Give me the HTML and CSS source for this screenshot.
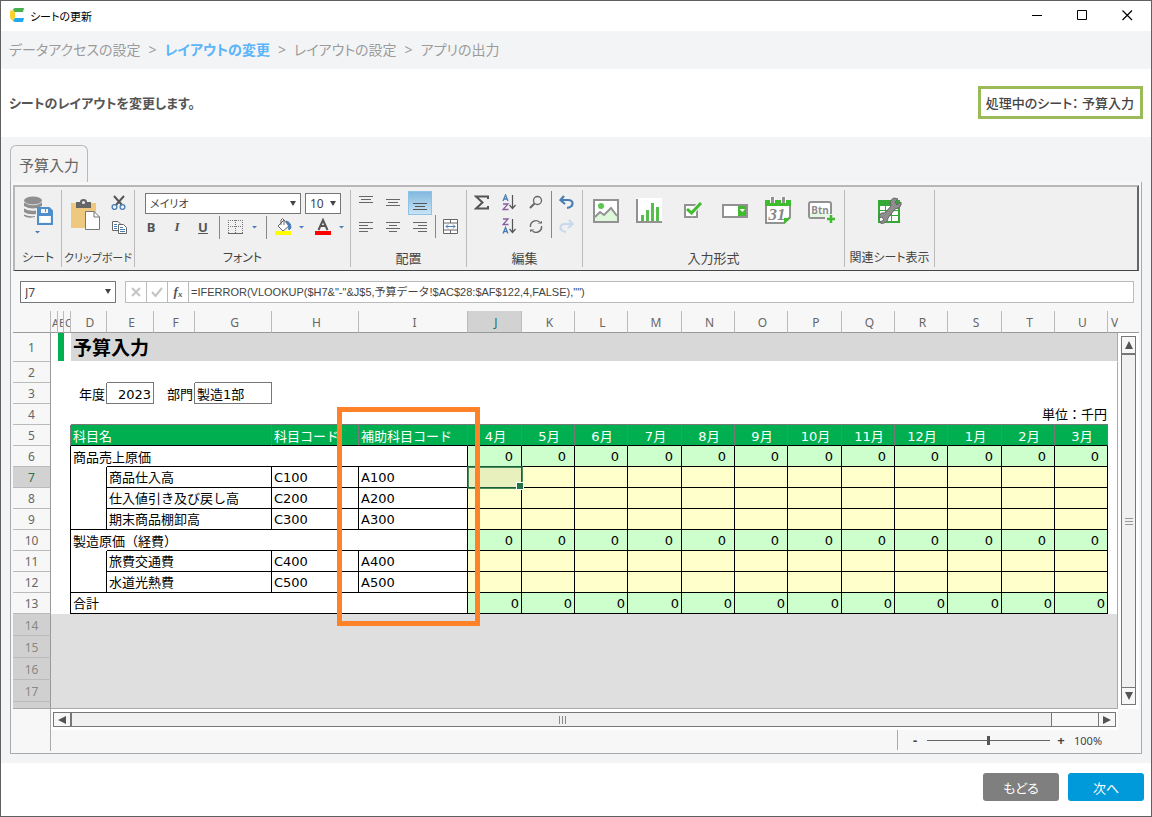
FILE: index.html
```html
<!DOCTYPE html>
<html lang="ja">
<head>
<meta charset="utf-8">
<title>シートの更新</title>
<link rel="stylesheet" href="styles.css">
</head>
<body>
<div class="window">
  <header class="titlebar">
    <svg class="logo" width="15" height="15" viewBox="0 0 15 15"><path d="M3 1Q4 0 6 0H14L13 4H4Z" fill="#48b050"/><path d="M0 4Q0 2 2 2L5 4V10L3 13Q0 11 0 9Z" fill="#fbd12c"/><path d="M5 10H14L13 14H6Q4 14 3 13Z" fill="#1fa9ec"/></svg>
    <span class="title">シートの更新</span>
    <button class="winbtn" aria-label="最小化"><svg width="11" height="11"><path d="M0 5.500H10" stroke="#000"/></svg></button>
    <button class="winbtn" aria-label="最大化"><svg width="11" height="11"><path d="M.5 .5H9.500V9.500H.5Z" fill="none" stroke="#000"/></svg></button>
    <button class="winbtn" aria-label="閉じる"><svg width="11" height="11"><path d="M.5 .5L10 10M10 .5L.5 10" stroke="#000" stroke-width="1.200"/></svg></button>
  </header>
  <nav class="crumbs">
    <span>データアクセスの設定</span><span>&gt;</span><b>レイアウトの変更</b><span>&gt;</span><span>レイアウトの設定</span><span>&gt;</span><span>アプリの出力</span>
  </nav>
  <section class="intro">
    <h1>シートのレイアウトを変更します。</h1>
    <div class="current">処理中のシート： 予算入力</div>
  </section>
  <main class="work">
    <button class="tab">予算入力</button>
    <div class="panel">
      <div class="ribbon">
        <section class="group g-sheet">
          <div class="tools">
            <button class="ic" aria-label="保存"><svg width="30" height="38"><g fill="#8f8f8f"><ellipse cx="10" cy="4.500" rx="9" ry="4"/><path d="M1 6.500Q10 12 19 6.500V10Q10 15 1 10Z"/><path d="M1 12.500Q6 15.500 13 14.500V18Q5 19 1 16Z"/><path d="M1 18.500Q6 21 12 20V21Q5 23 1 20Z"/></g><path d="M15 12H26L29 15V28H15Z" fill="#f0f0f0" stroke="#4d8ecb" stroke-width="2"/><path d="M15 12H26L29 15V20H15Z" fill="#4d8ecb"/><path d="M18 13H25V17H18Z" fill="#f5f5f5"/><path d="M22 13H23V16H22Z" fill="#4d8ecb"/><path d="M17.500 20H26.500V26H17.500Z" fill="#fff"/><path d="M12 35H17L14.500 37.500Z" fill="#4a7ab8"/></svg></button>
          </div>
          <div class="label">シート</div>
        </section>
        <section class="group g-clip">
          <div class="tools">
            <button class="ic" aria-label="貼り付け"><svg width="30" height="32"><path d="M0 4H25V29H0Z" fill="#edc87e"/><path d="M5 3H9Q9 0 12.500 0T16 3H20V9H5Z" fill="#666"/><circle cx="12.500" cy="3.500" r="1.500" fill="#f0f0f0"/><path d="M14.500 12.500H23L28.500 18V30.500H14.500Z" fill="#fff" stroke="#777"/><path d="M23 12.500V18H28.500" fill="none" stroke="#777"/></svg></button>
            <div class="stack">
              <button class="ic" aria-label="切り取り"><svg width="16" height="16"><path d="M3 1L11 10M13 1L5 10" stroke="#555" stroke-width="2"/><circle cx="3.500" cy="12" r="2.400" fill="none" stroke="#4a7fb5" stroke-width="1.300"/><circle cx="11.500" cy="12" r="2.400" fill="none" stroke="#4a7fb5" stroke-width="1.300"/></svg></button>
              <button class="ic" aria-label="コピー"><svg width="16" height="16"><path d="M1.500 2.500H7L9 4.500V11.500H1.500Z" fill="#fff" stroke="#666"/><path d="M7.500 5.500H12.500L15.500 8.500V14.500H7.500Z" fill="#fff" stroke="#666"/><path d="M3 5.500H6M3 7.500H6M3 9.500H6M9 8.500H12M9 10.500H14M9 12.500H14" stroke="#4a7fb5"/></svg></button>
            </div>
          </div>
          <div class="label">クリップボード</div>
        </section>
        <section class="group g-font">
          <div class="tools">
            <div class="row">
              <span class="pick family"><select aria-label="フォント名"><option>メイリオ</option></select></span>
              <span class="pick size"><select aria-label="サイズ"><option>10</option></select></span>
            </div>
            <div class="row marks">
              <button class="ch">B</button><button class="ch it">I</button><button class="ch un">U</button>
              <i class="bar"></i>
              <button class="ic" aria-label="罫線"><svg width="30" height="16"><path d="M.5 1V14M7.500 1V14M14.500 1V14M0 1.500H15M0 7.500H15" stroke="#777" stroke-dasharray="1 1"/><path d="M0 14.500H15" stroke="#666"/><path d="M24 7H29L26.500 9.500Z" fill="#4a7ab8"/></svg></button>
              <i class="bar"></i>
              <button class="ic" aria-label="塗りつぶし"><svg width="31" height="18"><path d="M3 8L9 2L14 8L8 13Z" fill="#fff" stroke="#666"/><path d="M6 7V2Q7.500-1 9 2V7" fill="none" stroke="#666"/><path d="M11 3Q16 4 16 10L14 12Q14 7 11 3Z" fill="#4a7fb5" stroke="#4a7fb5"/><path d="M0 13H16V17H0Z" fill="#ff0"/><path d="M24 8H29L26.500 10.500Z" fill="#4a7ab8"/></svg></button>
              <button class="ic" aria-label="文字色"><svg width="31" height="18"><path d="M3.500 12L8 2L12.500 12M5.500 8H10.500" fill="none" stroke="#555" stroke-width="2"/><path d="M0 13H16V17H0Z" fill="#f00"/><path d="M24 8H29L26.500 10.500Z" fill="#4a7ab8"/></svg></button>
            </div>
          </div>
          <div class="label">フォント</div>
        </section>
        <section class="group g-align">
          <div class="tools">
            <div class="aligns">
              <button class="al" aria-label="上揃え"><svg width="14" height="16"><path d="M0 1.500H14M2 4.500H12M0 7.500H14" stroke="#666"/></svg></button>
              <button class="al" aria-label="中央揃え(縦)"><svg width="14" height="16"><path d="M0 4.500H14M2 7.500H12M0 10.500H14" stroke="#666"/></svg></button>
              <button class="al on" aria-label="下揃え"><svg width="14" height="16"><path d="M0 8.500H14M2 11.500H12M0 14.500H14" stroke="#555"/></svg></button>
              <button class="al" aria-label="左揃え"><svg width="14" height="12"><path d="M0 1.500H14M0 4.500H9M0 7.500H14M0 10.500H9" stroke="#666"/></svg></button>
              <button class="al" aria-label="中央揃え"><svg width="14" height="12"><path d="M0 1.500H14M3 4.500H11M0 7.500H14M3 10.500H11" stroke="#666"/></svg></button>
              <button class="al" aria-label="右揃え"><svg width="14" height="12"><path d="M0 1.500H14M5 4.500H14M0 7.500H14M5 10.500H14" stroke="#666"/></svg></button>
            </div>
            <i class="bar low"></i>
            <button class="ic low" aria-label="結合"><svg width="16" height="16"><path d="M.5 .5H14.500V14.500H.5ZM.5 4H14.500M.5 11H14.500M7.500 .5V4M7.500 11V14.500" fill="#fff" stroke="#666"/><path d="M3 7.500H12M5 5.500L3 7.500L5 9.500M10 5.500L12 7.500L10 9.500" fill="none" stroke="#4a7fb5"/></svg></button>
          </div>
          <div class="label">配置</div>
        </section>
        <section class="group g-edit">
          <div class="tools">
            <button class="ic" aria-label="合計"><svg width="16" height="16"><path d="M14 5V2.500H2L8.500 8.500L2 14.500H14V12" fill="none" stroke="#555" stroke-width="2"/></svg></button>
            <div class="stack">
              <button class="ic" aria-label="昇順"><svg width="15" height="17"><path d="M1 7L3.500 1L6 7M2 5H5" fill="none" stroke="#4a7fb5" stroke-width="1.300"/><path d="M1 10H6L1 15.500H6.500" fill="none" stroke="#8860a0" stroke-width="1.300"/><path d="M10.500 1V14M7.500 11L10.500 14.500L13.500 11" fill="none" stroke="#555" stroke-width="1.200"/></svg></button>
              <button class="ic" aria-label="降順"><svg width="15" height="17"><path d="M1 1H6L1 6.500H6.500" fill="none" stroke="#8860a0" stroke-width="1.300"/><path d="M1 15.500L3.500 9.500L6 15.500M2 13.500H5" fill="none" stroke="#4a7fb5" stroke-width="1.300"/><path d="M10.500 1V14M7.500 11L10.500 14.500L13.500 11" fill="none" stroke="#555" stroke-width="1.200"/></svg></button>
            </div>
            <div class="stack">
              <button class="ic" aria-label="検索"><svg width="15" height="17"><circle cx="8.500" cy="6.500" r="4" fill="none" stroke="#666" stroke-width="1.300"/><path d="M5.500 9.500L1 14" stroke="#666" stroke-width="2"/></svg></button>
              <button class="ic" aria-label="再計算"><svg width="15" height="17"><path d="M1.500 9A5.500 5.500 0 0 1 10.500 4M12.500 8A5.500 5.500 0 0 1 3.500 13" fill="none" stroke="#666" stroke-width="1.400"/><path d="M8.500 5.500H13V3ZM5.500 11.500H1V14Z" fill="#666"/></svg></button>
            </div>
            <i class="bar tall"></i>
            <div class="stack">
              <button class="ic" aria-label="元に戻す"><svg width="15" height="17"><path d="M5 2L1.500 6L6 10M2 6H9Q13.500 6 13.500 9.500T8 14" fill="none" stroke="#4a7fb5" stroke-width="2.200"/></svg></button>
              <button class="ic" aria-label="やり直す"><svg width="15" height="17"><path d="M10 2L13.500 6L9 10M13 6H6Q1.500 6 1.500 9.500T7 14" fill="none" stroke="#c9d9eb" stroke-width="2.200"/></svg></button>
            </div>
          </div>
          <div class="label">編集</div>
        </section>
        <section class="group g-input">
          <div class="tools">
            <button class="ic" aria-label="画像"><svg width="26" height="28"><path d="M1 4H25V26H1Z" fill="#fff" stroke="#929292" stroke-width="2"/><path d="M2 20L7 15L11 19L18 11L24 19V25H2Z" fill="#dff8dc"/><path d="M2 21L7 16L11 19L18 12L24 20" fill="none" stroke="#929292" stroke-width="2"/><circle cx="8" cy="10" r="3" fill="#5cc653"/></svg></button>
            <button class="ic" aria-label="グラフ"><svg width="26" height="28"><path d="M0 2H26V27H0Z" fill="#fff"/><path d="M1 3V26H26" fill="none" stroke="#929292" stroke-width="2"/><path d="M5 19H8V25H5ZM10 14H13V25H10ZM15 7H18V25H15ZM20 11H23V25H20Z" fill="#56be4d"/></svg></button>
            <button class="ic" aria-label="チェックボックス"><svg width="26" height="28"><path d="M6 9H18V21H6Z" fill="#fff" stroke="#929292" stroke-width="2"/><path d="M9 13L13 17L22 6" fill="none" stroke="#f0f0f0" stroke-width="5"/><path d="M8 13L12.500 17L22 7" fill="none" stroke="#3fbc2e" stroke-width="3"/></svg></button>
            <button class="ic" aria-label="ドロップダウン"><svg width="26" height="28"><path d="M1 9H25V21H1Z" fill="#fff" stroke="#929292" stroke-width="2"/><path d="M16 10H24V20H16Z" fill="#3fbc2e"/><path d="M17.500 13H23L20.500 16Z" fill="#fff"/></svg></button>
            <button class="ic" aria-label="日付"><svg width="26" height="28"><path d="M1 8H25V21L19 27H1Z" fill="#fff" stroke="#929292" stroke-width="2"/><path d="M0 4H26V10H0Z" fill="#3fbc2e"/><path d="M19 28V22H26Z" fill="#3fbc2e"/><path d="M7.500 1V7M18.500 1V7" stroke="#fff" stroke-width="5"/><path d="M7.500 1V7M18.500 1V7" stroke="#929292" stroke-width="3"/><text x="12" y="24" class="t31">31</text></svg></button>
            <button class="ic" aria-label="ボタン"><svg width="28" height="28"><path d="M3 6H21Q23 6 23 8V20Q23 22 21 22H3Q1 22 1 20V8Q1 6 3 6Z" fill="#fff" stroke="#929292" stroke-width="2"/><path d="M2 17H22V21H2Z" fill="#e3f8e0"/><text x="12" y="18" class="tbtn">Btn</text><path d="M17 18H28V28H17Z" fill="#f0f0f0"/><path d="M23 19V27M19 23H27" stroke="#3fbc2e" stroke-width="2.500"/></svg></button>
          </div>
          <div class="label">入力形式</div>
        </section>
        <section class="group g-rel">
          <div class="tools">
            <button class="ic" aria-label="関連シート表示"><svg width="26" height="28"><path d="M1 4H23V27H1Z" fill="#35a936"/><path d="M3 10H8V14H3ZM9 10H14V14H9ZM15 10H21V14H15ZM3 15H8V19H3ZM9 15H14V19H9ZM15 15H21V19H15ZM3 20H8V25H3ZM9 20H14V25H9ZM15 20H21V25H15Z" fill="#fff"/><path d="M17 2L21 3L18 6L20 9L24 6Q25 12 18 13L11 22Q11 27 4 27.500L3 26L7 24L5 21L2 22Q2 16 8 17L14 10Q12 4 17 2Z" fill="#8e8e8e" stroke="#666"/></svg></button>
          </div>
          <div class="label">関連シート表示</div>
        </section>
      </div>

      <div class="formula">
        <span class="pick cellref"><select aria-label="セル"><option>J7</option></select></span>
        <div class="fx">
          <button aria-label="キャンセル"><svg width="12" height="12"><path d="M2 2L10 10M10 2L2 10" stroke="#c4c4c4" stroke-width="2"/></svg></button>
          <button aria-label="確定"><svg width="12" height="12"><path d="M1 6L4.500 10L11 2" fill="none" stroke="#c4c4c4" stroke-width="2"/></svg></button>
          <button class="fn"><i>f</i><small>x</small></button>
          <input aria-label="数式" value='=IFERROR(VLOOKUP($H7&amp;"-"&amp;J$5,予算データ!$AC$28:$AF$122,4,FALSE),"")'>
        </div>
      </div>

      <div class="sheetarea">
        <div class="sheet">
          <table class="grid">
            <colgroup><col class="w38"><col class="w7"><col class="w6"><col class="w7"><col class="w36"><col class="w47"><col class="w41"><col class="w77"><col class="w87"><col class="w109"><col class="w54"><col class="w53"><col class="w53"><col class="w54"><col class="w53"><col class="w53"><col class="w54"><col class="w53"><col class="w53"><col class="w54"><col class="w53"><col class="w53"><col></colgroup>
            <thead><tr><th></th><th class="slim">A</th><th class="slim">B</th><th class="slim">C</th><th>D</th><th>E</th><th>F</th><th>G</th><th>H</th><th>I</th><th class="sel">J</th><th>K</th><th>L</th><th>M</th><th>N</th><th>O</th><th>P</th><th>Q</th><th>R</th><th>S</th><th>T</th><th>U</th><th>V</th></tr></thead>
            <tbody>
              <tr class="r1"><th>1</th><td></td><td class="mark"></td><td></td><td class="name" colspan="19">予算入力</td></tr>
              <tr><th>2</th><td colspan="4"></td><td class="gb"></td><td></td><td class="gb"></td><td colspan="15"></td></tr>
              <tr><th>3</th><td colspan="3"></td><td class="gr ar">年度</td><td class="gr gb ar lowtext">2023</td><td class="gr ar">部門</td><td class="gr gb lowtext">製造1部</td><td colspan="15"></td></tr>
              <tr><th>4</th><td colspan="3"></td><td class="gb ar" colspan="18">単位：千円</td><td></td></tr>
              <tr class="head"><th>5</th><td colspan="2"></td><td class="gr"></td><td class="hd" colspan="4">科目名</td><td class="hd">科目コード</td><td class="hd">補助科目コード</td><td class="hd m">4月</td><td class="hd m">5月</td><td class="hd m">6月</td><td class="hd m">7月</td><td class="hd m">8月</td><td class="hd m">9月</td><td class="hd m">10月</td><td class="hd m">11月</td><td class="hd m">12月</td><td class="hd m">1月</td><td class="hd m">2月</td><td class="hd m">3月</td><td></td></tr>
              <tr class="sum"><th>6</th><td colspan="2"></td><td class="br"></td><td>商品売上原価</td><td class="br bb" colspan="5"></td><td>0</td><td>0</td><td>0</td><td>0</td><td>0</td><td>0</td><td>0</td><td>0</td><td>0</td><td>0</td><td>0</td><td>0</td><td></td></tr>
              <tr class="item"><th class="sel">7</th><td colspan="2"></td><td class="br"></td><td class="br"></td><td class="br bb" colspan="3">商品仕入高</td><td class="br bb">C100</td><td class="br bb">A100</td><td class="cursor"><span></span></td><td></td><td></td><td></td><td></td><td></td><td></td><td></td><td></td><td></td><td></td><td></td><td></td></tr>
              <tr class="item"><th>8</th><td colspan="2"></td><td class="br"></td><td class="br"></td><td class="br bb" colspan="3">仕入値引き及び戻し高</td><td class="br bb">C200</td><td class="br bb">A200</td><td></td><td></td><td></td><td></td><td></td><td></td><td></td><td></td><td></td><td></td><td></td><td></td><td></td></tr>
              <tr class="item"><th>9</th><td colspan="2"></td><td class="br"></td><td class="br bb"></td><td class="br bb" colspan="3">期末商品棚卸高</td><td class="br bb">C300</td><td class="br bb">A300</td><td></td><td></td><td></td><td></td><td></td><td></td><td></td><td></td><td></td><td></td><td></td><td></td><td></td></tr>
              <tr class="sum"><th>10</th><td colspan="2"></td><td class="br"></td><td>製造原価（経費）</td><td class="br bb" colspan="5"></td><td>0</td><td>0</td><td>0</td><td>0</td><td>0</td><td>0</td><td>0</td><td>0</td><td>0</td><td>0</td><td>0</td><td>0</td><td></td></tr>
              <tr class="item"><th>11</th><td colspan="2"></td><td class="br"></td><td class="br"></td><td class="br bb" colspan="3">旅費交通費</td><td class="br bb">C400</td><td class="br bb">A400</td><td></td><td></td><td></td><td></td><td></td><td></td><td></td><td></td><td></td><td></td><td></td><td></td><td></td></tr>
              <tr class="item"><th>12</th><td colspan="2"></td><td class="br"></td><td class="br bb"></td><td class="br bb" colspan="3">水道光熱費</td><td class="br bb">C500</td><td class="br bb">A500</td><td></td><td></td><td></td><td></td><td></td><td></td><td></td><td></td><td></td><td></td><td></td><td></td><td></td></tr>
              <tr class="sum total"><th>13</th><td colspan="2"></td><td class="br"></td><td class="bb">合計</td><td class="br bb" colspan="5"></td><td>0</td><td>0</td><td>0</td><td>0</td><td>0</td><td>0</td><td>0</td><td>0</td><td>0</td><td>0</td><td>0</td><td>0</td><td></td></tr>
              <tr class="off"><th>14</th><td colspan="22"></td></tr>
              <tr class="off"><th>15</th><td colspan="22"></td></tr>
              <tr class="off"><th>16</th><td colspan="22"></td></tr>
              <tr class="off"><th>17</th><td colspan="22"></td></tr>
              <tr class="off last"><th></th><td colspan="22"></td></tr>
            </tbody>
          </table>
          <div class="highlight"></div>
        </div>
        <div class="vside">
          <div class="vscroll">
            <button class="up" aria-label="上へ"></button>
            <div class="vthumb"><svg width="8" height="8"><path d="M0 1.500H8M0 4.500H8M0 7.500H8" stroke="#999"/></svg></div>
            <button class="down" aria-label="下へ"></button>
          </div>
        </div>
      </div>

      <div class="bottom">
        <div class="stub"></div>
        <div class="below">
          <div class="hwrap">
            <div class="hscroll">
              <button class="left" aria-label="左へ"></button>
              <div class="hthumb"><svg width="8" height="8"><path d="M1.500 0V8M4.500 0V8M7.500 0V8" stroke="#888"/></svg></div>
              <div class="htrack"></div>
              <button class="right" aria-label="右へ"></button>
            </div>
          </div>
          <div class="zoom">
            <button aria-label="縮小">-</button>
            <input type="range" min="0" max="100" value="50" aria-label="ズーム">
            <button aria-label="拡大">+</button>
            <span>100%</span>
          </div>
        </div>
      </div>
    </div>
  </main>
  <footer class="actions">
    <button class="back">もどる</button>
    <button class="next">次へ</button>
  </footer>
</div>
</body>
</html>
```
FILE: styles.css
```css
* { box-sizing: border-box; }
body { margin: 0; font-family: "Noto Sans", "Noto Sans CJK JP", sans-serif; font-size: 12px; color: #444; }
button { margin: 0; padding: 0; border: 0; background: none; font: inherit; color: inherit; }
button, h1, .title, .crumbs, .current, .label, .pick, .actions { font-feature-settings: "palt"; }
svg { display: block; }
.window { min-height: 100vh; display: flex; flex-direction: column; border: 1px solid #606060; background: #fff; }

.titlebar { height: 30px; display: flex; align-items: center; padding: 0 1px 1px 9px; }
.title { flex: 1; margin-left: 5px; color: #000; font-size: 11px; }
.winbtn { width: 45px; height: 29px; display: flex; align-items: center; justify-content: center; }
.crumbs { height: 38px; display: flex; align-items: center; gap: 8px; padding: 0 8px 2px; background: #f3f4f6; color: #9b9b9b; font-size: 14px; }
.crumbs b { color: #5bb5f8; }
.intro { height: 68px; display: flex; align-items: center; justify-content: space-between; padding: 0 8px 2px; }
.intro h1 { margin: 0; font-size: 13px; color: #555; }
.current { height: 33px; display: flex; align-items: center; padding: 0 6px 0 5px; border: 3px solid #9bbb59; font-size: 13px; font-weight: 500; color: #444; white-space: pre; }

.work { flex: 1; padding: 8px 9px 9px; background: #f3f4f6; display: flex; flex-direction: column; }
.tab { align-self: flex-start; height: 37px; width: 78px; border: 1px solid #b8b8b8; border-bottom: 0; border-radius: 6px 6px 0 0; background: #f3f3f3; font-size: 15px; color: #666; }
.panel { flex: 1; display: flex; flex-direction: column; border: 1px solid #aaa; border-top: 0; background: #f7f7f7; padding: 3px 2px 2px; }

.ribbon { height: 86px; display: flex; border: 2px solid #b8b8b8; border-right-color: #666; border-bottom: 1px solid #444; background: #f0f0f0; }
.group { display: flex; flex-direction: column; padding-top: 1px; border-right: 1px solid #bbb; margin: 3px 0; }
.tools { flex: 1; display: flex; align-items: flex-start; }
.label { height: 20px; line-height: 22px; text-align: center; font-size: 13px; white-space: nowrap; }
.g-clip .label { font-size: 11px; }
.g-sheet .label, .g-font .label, .g-rel .label { font-size: 12px; }
.stack { display: grid; gap: 7px; }
.bar { width: 1px; height: 23px; background: #888; }
.g-sheet { width: 47px; }
.g-sheet .tools { padding: 5px 0 0 8px; }
.g-clip { width: 73px; }
.g-clip .tools { padding: 4px 0 0 9px; gap: 10px; }
.g-clip .tools > .ic { padding-top: 4px; }
.g-clip .stack { gap: 8px; }
.g-font { width: 216px; }
.g-font .tools { flex-direction: column; padding: 2px 0 0 10px; gap: 1px; }
.row { display: flex; gap: 4px; }
.pick { position: relative; display: block; height: 21px; border: 1px solid #777; background: #fff; }
.pick select { appearance: none; width: 100%; height: 100%; border: 0; padding: 0 4px; background: none; font: inherit; font-feature-settings: inherit; color: #444; }
.pick::after { content: ""; position: absolute; right: 4px; top: 7px; border: 3px solid transparent; border-top: 5px solid #444; border-bottom: 0; pointer-events: none; }
.family { width: 156px; }
.family select { font-size: 11px; }
.size { width: 36px; }
.marks { align-items: center; gap: 8px; height: 24px; }
.ch { width: 12px; margin-right: 6px; font-size: 13px; line-height: 18px; font-weight: 700; color: #555; }
.it { font-family: "Liberation Serif", serif; font-style: italic; }
.un { text-decoration: underline; margin-right: 2px; }
.marks .ic:last-child { margin-left: 1px; }
.g-align { width: 116px; }
.aligns { display: grid; grid-template-columns: 24px 24px 24px; column-gap: 3px; padding-left: 3px; }
.al { height: 24px; display: flex; align-items: center; justify-content: center; border: 1px solid transparent; }
.al.on { background: linear-gradient(#82b9de, #c8e3f5); border-color: #8fc3e6; }
.bar.low { margin: 24px 0 0 3px; }
.ic.low { padding: 28px 0 0 7px; }
.g-edit { width: 116px; }
.g-edit .tools { padding: 3px 0 0 7px; gap: 12px; }
.g-edit .tools > .bar { height: 47px; margin: -3px -5px 0 -5px; }
.g-input { width: 262px; }
.g-input .tools { padding: 5px 0 0 10px; gap: 17px; }
.g-rel { width: 90px; }
.g-rel .tools { justify-content: center; padding-top: 5px; }
.t31 { font: italic bold 17px "Liberation Serif", serif; text-anchor: middle; fill: #888; }
.tbtn { font: bold 10px "Noto Sans", sans-serif; text-anchor: middle; fill: #8e8e8e; }

.formula { height: 40px; display: flex; gap: 9px; align-items: flex-start; padding: 10px 5px 0 7px; }
.cellref { width: 96px; height: 22px; }
.fx { flex: 1; height: 22px; display: flex; border: 1px solid #bbb; background: #fff; }
.fx button { width: 21px; border-right: 1px solid #bbb; display: flex; align-items: center; justify-content: center; }
.fx .fn { font: bold 13px "Liberation Serif", serif; color: #555; }
.fn small { font-size: 9px; font-style: italic; padding-top: 4px; }
.fx input { flex: 1; min-width: 0; border: 0; padding: 0 2px 2px; background: none; font: 11px "Liberation Sans", "Noto Sans CJK JP", sans-serif; color: #444; }

.sheetarea { display: flex; }
.sheet { flex: 1; min-width: 0; position: relative; overflow: hidden; }
.grid { width: 100%; table-layout: fixed; border-collapse: separate; border-spacing: 0; background: #fff; font: 13px/18px "DejaVu Sans", "Noto Sans CJK JP", sans-serif; color: #000; }
.w38 { width: 38px; } .w7 { width: 7px; } .w6 { width: 6px; } .w36 { width: 36px; } .w47 { width: 47px; } .w41 { width: 41px; } .w77 { width: 77px; } .w87 { width: 87px; } .w109 { width: 109px; } .w54 { width: 54px; } .w53 { width: 53px; }
.grid th { height: 21px; padding: 2px 0 0; background: #f7f7f7; border: 0 solid #bbb; border-width: 0 1px 1px 0; font: 12px/18px "Noto Sans", sans-serif; color: #666; overflow: hidden; }
.grid thead th { height: 22px; padding-left: 3px; border-bottom-color: #999; }
.grid thead .slim { padding-left: 1px; text-align: left; font-size: 11px; }
.grid thead th:last-child { border-right: 0; }
.grid tbody th { border-right-color: #999; }
.grid .sel { background: #d2d2d2; color: #2b7048; }
.grid td { height: 21px; padding: 2px 2px 0; white-space: nowrap; border: 0 solid #777; }
.grid tbody td:last-child { border-right: 1px solid #aaa; }
.r1 th, .grid .r1 td { height: 29px; }
.grid .mark { background: #00b050; border-bottom: 1px solid #fff; }
.grid .name { background: #d8d8d8; border-bottom: 1px solid #fff; font-size: 19px; line-height: 26px; font-weight: 700; }
.grid .ar { text-align: right; padding-right: 1px; }
.grid .gr { border-right-width: 1px; }
.grid .gb { border-bottom-width: 1px; }
.grid .lowtext { padding: 4px 2px 0; line-height: 16px; }
.grid .br { border-right: 1px solid #000; }
.grid .bb { border-bottom: 1px solid #000; }
.grid .hd { background: #00b050; color: #fff; border-right: 1px solid #777; border-bottom: 1px solid #000; padding-top: 4px; line-height: 16px; }
.grid .m { text-align: center; padding-left: 2px; padding-right: 0; }
.grid .sum td:nth-child(n+6):nth-last-child(n+2) { background: #cfc; border: 0 solid #000; border-width: 0 1px 1px 0; text-align: right; padding-right: 8px; }
.grid .sum.total td:nth-child(n+6):nth-last-child(n+2) { padding-right: 2px; }
.grid .sum td:nth-child(n+7):nth-last-child(n+2) { font-weight: 400; }
.grid .item td:nth-child(n+8):nth-last-child(n+2) { background: #ffc; border: 0 solid #000; border-width: 0 1px 1px 0; }
.grid .cursor { position: relative; }
.cursor span { position: absolute; inset: -1px -2px -2px -1px; border: 2px solid rgba(33, 115, 70, .8); background: rgba(33, 115, 70, .1); }
.cursor span::after { content: ""; position: absolute; right: -3px; bottom: -3px; width: 6px; height: 6px; background: #217346; border: 1px solid #fff; }
.grid .off td { height: 22px; background: #dfdfdf; }
.grid .off th { height: 22px; background: #d0d0d0; color: #888; }
.grid .last th, .grid .last td { height: 7px; padding: 0; border-bottom: 1px solid #aaa; }
.highlight { position: absolute; left: 324px; top: 96px; width: 143px; height: 219px; border: 5px solid #ff8228; }
.vside { width: 21px; display: flex; background: #fff; border-top: 21px solid #f7f7f7; padding: 4px 3px 4px; box-shadow: inset 0 1px 0 #999; }
.vscroll { flex: 1; display: flex; flex-direction: column; border: 1px solid #777; background: #f0f0f0; }
.vscroll button, .hscroll button { display: flex; align-items: center; justify-content: center; background: #f7f7f7; }
.vscroll button { height: 16px; }
.vthumb { flex: 1; display: flex; align-items: center; justify-content: center; border: 1px solid #777; border-width: 2px 0 1px; }
.up::before, .down::before, .left::before, .right::before { content: ""; border: 4px solid transparent; }
.up::before { border-bottom: 8px solid #555; border-top: 0; }
.down::before { border-top: 8px solid #555; border-bottom: 0; }
.left::before { border-right: 8px solid #555; border-left: 0; }
.right::before { border-left: 8px solid #555; border-right: 0; }

.bottom { flex: 1; display: flex; }
.stub { width: 38px; border-right: 1px solid #aaa; }
.below { flex: 1; padding-right: 21px; }
.hwrap { background: #fff; padding: 3px 2px 3px; }
.hscroll { height: 15px; display: flex; border: 1px solid #777; background: #f7f7f7; }
.hscroll button { width: 16px; }
.hthumb { flex: 1; display: flex; align-items: center; justify-content: center; border: 1px solid #777; border-width: 0 1px 0 2px; background: #f0f0f0; }
.htrack { width: 47px; border-right: 1px solid #777; }
.zoom { height: 20px; width: 221px; margin-left: auto; display: flex; align-items: center; border-left: 1px solid #aaa; padding-left: 12px; font-size: 11px; }
.zoom button { width: 10px; font-weight: 700; font-size: 13px; line-height: 18px; }
.zoom input { appearance: none; width: 123px; height: 9px; margin: 0 6px 0 7px; background: linear-gradient(#666, #666) center / 100% 1px no-repeat; }
.zoom input::-webkit-slider-thumb { appearance: none; width: 3px; height: 9px; background: #555; }
.zoom span { margin-left: 8px; }

.actions { height: 53px; display: flex; justify-content: flex-end; gap: 9px; padding: 10px 7px 0 0; }
.actions button { width: 76px; height: 28px; border-radius: 3px; color: #fff; font-size: 13px; }
.back { background: #7f7f7f; }
.actions .next { background: #0099d9; }
```
